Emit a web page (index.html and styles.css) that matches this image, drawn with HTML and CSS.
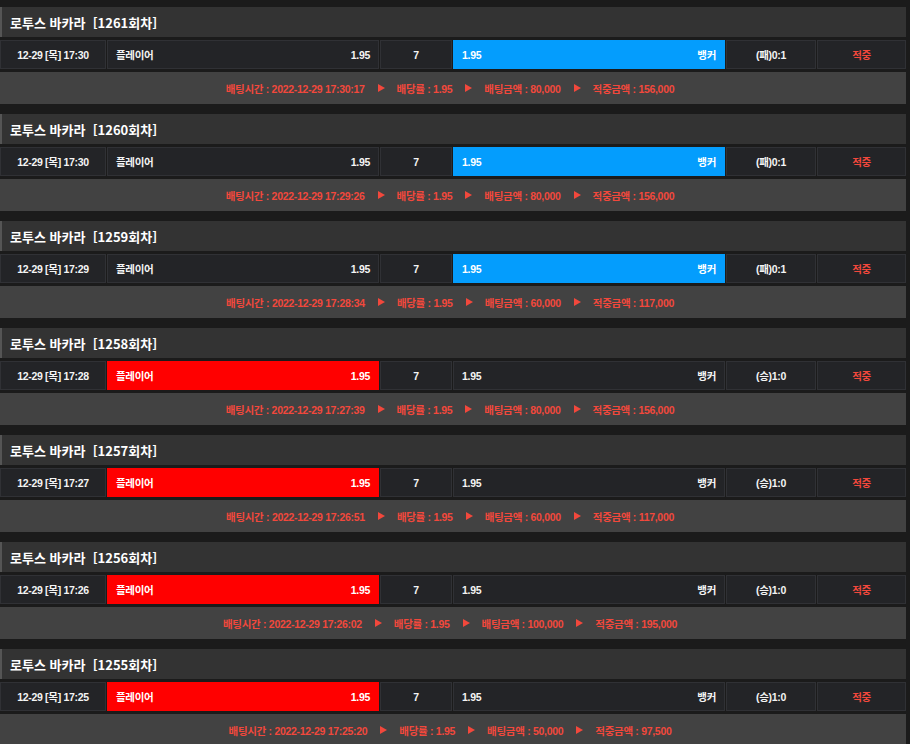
FILE: index.html
```html
<!DOCTYPE html>
<html lang="ko">
<head>
<meta charset="utf-8">
<link rel="stylesheet" href="styles.css">
</head>
<body>
<div class="list">

<section class="bet">
  <div class="title">로투스 바카라&nbsp;&nbsp;[1261회차]</div>
  <div class="row">
    <div class="cell date">12-29 [목] 17:30</div>
    <div class="cell pick"><span>플레이어</span><span>1.95</span></div>
    <div class="cell tie">7</div>
    <div class="cell pick on-blue"><span>1.95</span><span>뱅커</span></div>
    <div class="cell score">(패)0:1</div>
    <div class="cell hit">적중</div>
  </div>
  <div class="info">배팅시간 : 2022-12-29 17:30:17<i class="arrow"></i>배당률 : 1.95<i class="arrow"></i>배팅금액 : 80,000<i class="arrow"></i>적중금액 : 156,000</div>
</section>

<section class="bet">
  <div class="title">로투스 바카라&nbsp;&nbsp;[1260회차]</div>
  <div class="row">
    <div class="cell date">12-29 [목] 17:30</div>
    <div class="cell pick"><span>플레이어</span><span>1.95</span></div>
    <div class="cell tie">7</div>
    <div class="cell pick on-blue"><span>1.95</span><span>뱅커</span></div>
    <div class="cell score">(패)0:1</div>
    <div class="cell hit">적중</div>
  </div>
  <div class="info">배팅시간 : 2022-12-29 17:29:26<i class="arrow"></i>배당률 : 1.95<i class="arrow"></i>배팅금액 : 80,000<i class="arrow"></i>적중금액 : 156,000</div>
</section>

<section class="bet">
  <div class="title">로투스 바카라&nbsp;&nbsp;[1259회차]</div>
  <div class="row">
    <div class="cell date">12-29 [목] 17:29</div>
    <div class="cell pick"><span>플레이어</span><span>1.95</span></div>
    <div class="cell tie">7</div>
    <div class="cell pick on-blue"><span>1.95</span><span>뱅커</span></div>
    <div class="cell score">(패)0:1</div>
    <div class="cell hit">적중</div>
  </div>
  <div class="info">배팅시간 : 2022-12-29 17:28:34<i class="arrow"></i>배당률 : 1.95<i class="arrow"></i>배팅금액 : 60,000<i class="arrow"></i>적중금액 : 117,000</div>
</section>

<section class="bet">
  <div class="title">로투스 바카라&nbsp;&nbsp;[1258회차]</div>
  <div class="row">
    <div class="cell date">12-29 [목] 17:28</div>
    <div class="cell pick on-red"><span>플레이어</span><span>1.95</span></div>
    <div class="cell tie">7</div>
    <div class="cell pick"><span>1.95</span><span>뱅커</span></div>
    <div class="cell score">(승)1:0</div>
    <div class="cell hit">적중</div>
  </div>
  <div class="info">배팅시간 : 2022-12-29 17:27:39<i class="arrow"></i>배당률 : 1.95<i class="arrow"></i>배팅금액 : 80,000<i class="arrow"></i>적중금액 : 156,000</div>
</section>

<section class="bet">
  <div class="title">로투스 바카라&nbsp;&nbsp;[1257회차]</div>
  <div class="row">
    <div class="cell date">12-29 [목] 17:27</div>
    <div class="cell pick on-red"><span>플레이어</span><span>1.95</span></div>
    <div class="cell tie">7</div>
    <div class="cell pick"><span>1.95</span><span>뱅커</span></div>
    <div class="cell score">(승)1:0</div>
    <div class="cell hit">적중</div>
  </div>
  <div class="info">배팅시간 : 2022-12-29 17:26:51<i class="arrow"></i>배당률 : 1.95<i class="arrow"></i>배팅금액 : 60,000<i class="arrow"></i>적중금액 : 117,000</div>
</section>

<section class="bet">
  <div class="title">로투스 바카라&nbsp;&nbsp;[1256회차]</div>
  <div class="row">
    <div class="cell date">12-29 [목] 17:26</div>
    <div class="cell pick on-red"><span>플레이어</span><span>1.95</span></div>
    <div class="cell tie">7</div>
    <div class="cell pick"><span>1.95</span><span>뱅커</span></div>
    <div class="cell score">(승)1:0</div>
    <div class="cell hit">적중</div>
  </div>
  <div class="info">배팅시간 : 2022-12-29 17:26:02<i class="arrow"></i>배당률 : 1.95<i class="arrow"></i>배팅금액 : 100,000<i class="arrow"></i>적중금액 : 195,000</div>
</section>

<section class="bet">
  <div class="title">로투스 바카라&nbsp;&nbsp;[1255회차]</div>
  <div class="row">
    <div class="cell date">12-29 [목] 17:25</div>
    <div class="cell pick on-red"><span>플레이어</span><span>1.95</span></div>
    <div class="cell tie">7</div>
    <div class="cell pick"><span>1.95</span><span>뱅커</span></div>
    <div class="cell score">(승)1:0</div>
    <div class="cell hit">적중</div>
  </div>
  <div class="info">배팅시간 : 2022-12-29 17:25:20<i class="arrow"></i>배당률 : 1.95<i class="arrow"></i>배팅금액 : 50,000<i class="arrow"></i>적중금액 : 97,500</div>
</section>

</div>
</body>
</html>
```

FILE: styles.css
```css
html, body {
  margin: 0;
  padding: 0;
  background: #1b1b1b;
}
body {
  font-family: "Noto Sans CJK KR", "Noto Sans", sans-serif;
  font-weight: 700;
  color: #f2f2f2;
}
.list {
  width: 906px;
  padding-top: 7px;
}
.bet {
  margin-bottom: 10px;
}
.title {
  height: 30px;
  box-sizing: border-box;
  background: #333333;
  border-left: 2px solid #555555;
  padding-left: 8px;
  display: flex;
  align-items: center;
  font-size: 13px;
  color: #ffffff;
  white-space: pre;
}
.row {
  margin-top: 3px;
  height: 29px;
  display: flex;
  gap: 1px;
}
.cell {
  box-sizing: border-box;
  height: 29px;
  background: #232427;
  border: 1px solid #303135;
  display: flex;
  align-items: center;
  justify-content: center;
  font-family: "Liberation Sans", "Noto Sans CJK KR", sans-serif;
  font-size: 10.5px;
  letter-spacing: -0.3px;
  color: #f4f4f4;
}
.date { width: 106px; }
.pick {
  width: 272px;
  justify-content: space-between;
  padding: 0 8px;
}
.tie { width: 72px; }
.score { width: 90px; }
.hit { width: 89px; color: #f2483c; }
.on-blue { background: #049dfd; border-color: #049dfd; color: #fff; }
.on-red { background: #ff0000; border-color: #ff0000; color: #fff; }
.info {
  margin-top: 3px;
  height: 32px;
  background: #424242;
  display: flex;
  align-items: center;
  justify-content: center;
  font-family: "Liberation Sans", "Noto Sans CJK KR", sans-serif;
  font-size: 10.5px;
  letter-spacing: -0.3px;
  color: #f2483c;
  padding-right: 6px;
}
.arrow {
  display: inline-block;
  width: 0;
  height: 0;
  border-top: 4.5px solid transparent;
  border-bottom: 4.5px solid transparent;
  border-left: 7px solid #f2483c;
  margin: 0 12px 0 13px;
}
```
